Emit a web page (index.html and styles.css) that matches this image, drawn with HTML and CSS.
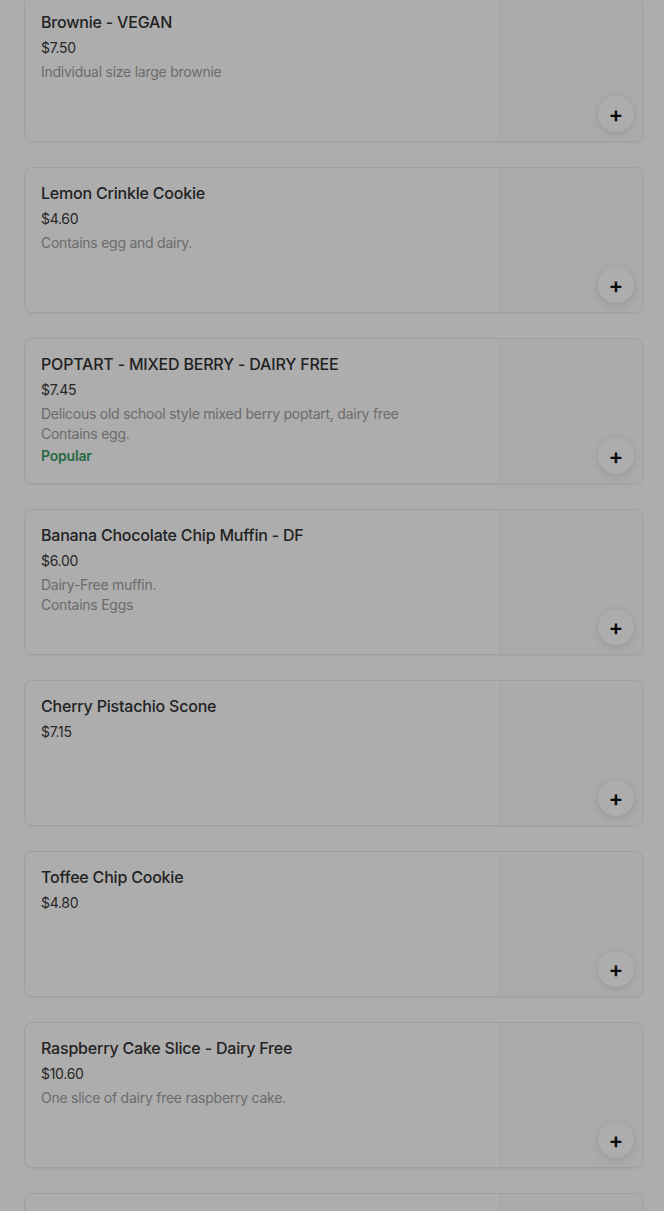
FILE: index.html
```html
<!DOCTYPE html>
<html lang="en">
<head>
    <meta charset="UTF-8">
    <title>Menu</title>
    <link rel="stylesheet" href="styles.css">
</head>
<body>
<!-- 菜单列表 -->
<ul class="menu">
    <li class="item">
        <div class="info">
            <h3 class="name">Brownie - VEGAN</h3>
            <p class="price">$7.50</p>
            <p class="desc">Individual size large brownie</p>
        </div>
        <div class="pic"><button class="add">+</button></div>
    </li>
    <li class="item">
        <div class="info">
            <h3 class="name">Lemon Crinkle Cookie</h3>
            <p class="price">$4.60</p>
            <p class="desc">Contains egg and dairy.</p>
        </div>
        <div class="pic"><button class="add">+</button></div>
    </li>
    <li class="item">
        <div class="info">
            <h3 class="name">POPTART - MIXED BERRY - DAIRY FREE</h3>
            <p class="price">$7.45</p>
            <p class="desc">Delicous old school style mixed berry poptart, dairy free<br>Contains egg.</p>
            <p class="tag">Popular</p>
        </div>
        <div class="pic"><button class="add">+</button></div>
    </li>
    <li class="item">
        <div class="info">
            <h3 class="name">Banana Chocolate Chip Muffin - DF</h3>
            <p class="price">$6.00</p>
            <p class="desc">Dairy-Free muffin.<br>Contains Eggs</p>
        </div>
        <div class="pic"><button class="add">+</button></div>
    </li>
    <li class="item">
        <div class="info">
            <h3 class="name">Cherry Pistachio Scone</h3>
            <p class="price">$7.15</p>
        </div>
        <div class="pic"><button class="add">+</button></div>
    </li>
    <li class="item">
        <div class="info">
            <h3 class="name">Toffee Chip Cookie</h3>
            <p class="price">$4.80</p>
        </div>
        <div class="pic"><button class="add">+</button></div>
    </li>
    <li class="item">
        <div class="info">
            <h3 class="name">Raspberry Cake Slice - Dairy Free</h3>
            <p class="price">$10.60</p>
            <p class="desc">One slice of dairy free raspberry cake.</p>
        </div>
        <div class="pic"><button class="add">+</button></div>
    </li>
    <li class="item">
        <div class="info">
            <h3 class="name">Blueberry Muffin - Vegan</h3>
            <p class="price">$6.00</p>
        </div>
        <div class="pic"><button class="add">+</button></div>
    </li>
</ul>
<!-- 遮罩层 -->
<div class="mask"></div>
</body>
</html>
```
FILE: styles.css
```css
* {
    margin: 0;
    padding: 0;
    box-sizing: border-box;
}

body {
    background-color: #fff;
    font-family: Inter, "Noto Sans", sans-serif;
    color: #333;
    overflow: hidden;
}

.menu {
    list-style: none;
    display: flex;
    flex-direction: column;
    gap: 25px;
    /* 页面已经向下滚动了一点 */
    margin-top: -4px;
    padding: 0 21px 0 24px;
}

.item {
    display: flex;
    height: 146px;
    border: 1px solid #ebebeb;
    border-radius: 8px;
    box-shadow: 0 1px 3px rgba(0, 0, 0, 0.05);
    overflow: hidden;
}

.info {
    flex: 1;
    padding: 15px 16px 0 16px;
}

.name {
    font-size: 16px;
    font-weight: 500;
    line-height: 20px;
    letter-spacing: -0.2px;
}

.price {
    margin-top: 6px;
    font-size: 14px;
    line-height: 20px;
    letter-spacing: -0.3px;
    color: #3a3a3a;
}

.desc {
    margin-top: 4px;
    font-size: 14px;
    line-height: 20px;
    letter-spacing: -0.25px;
    color: #a0a0a0;
}

.tag {
    margin-top: 2px;
    font-size: 14px;
    font-weight: 600;
    line-height: 20px;
    letter-spacing: -0.2px;
    color: #3a9a68;
}

/* 右边的图片位置 */
.pic {
    width: 142px;
    background-color: #fcfcfc;
    border-left: 1px solid #f2f2f2;
    display: flex;
    align-items: flex-end;
    justify-content: flex-end;
    padding: 0 8px 9px 0;
}

.add {
    width: 36px;
    height: 36px;
    border: none;
    border-radius: 50%;
    background-color: #fff;
    box-shadow: 0 2px 8px rgba(0, 0, 0, 0.12);
    font-family: Inter, sans-serif;
    font-size: 22px;
    font-weight: 600;
    line-height: 36px;
    color: #111;
}

/* 半透明遮罩 */
.mask {
    position: fixed;
    top: 0;
    left: 0;
    right: 0;
    bottom: 0;
    background-color: rgba(0, 0, 0, 0.32);
}
```
